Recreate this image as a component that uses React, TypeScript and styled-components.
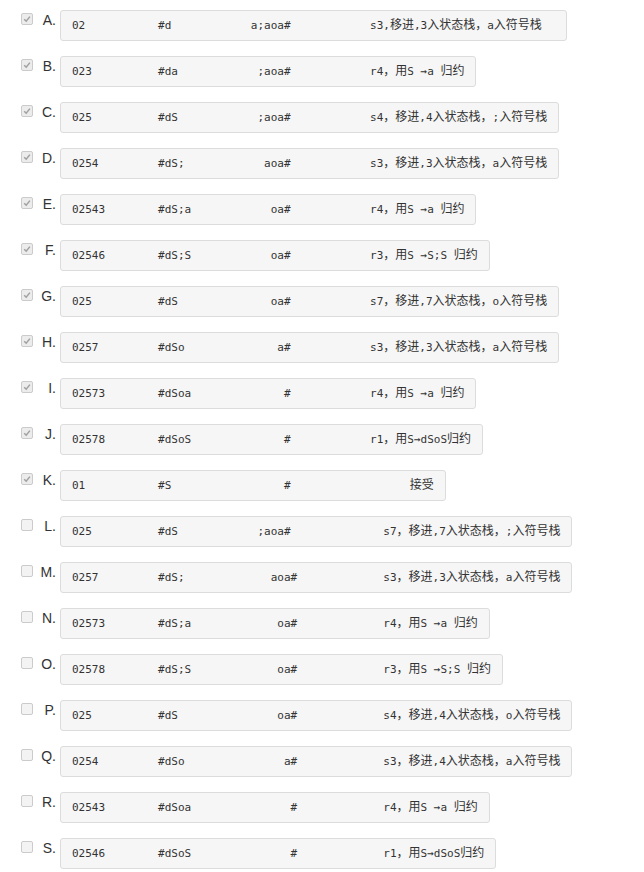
import styled, { createGlobalStyle } from "styled-components";

const GlobalStyle = createGlobalStyle`
  body {
    margin: 0;
    background: #fff;
    font-family: "Liberation Sans", Arial, sans-serif;
  }
`;

interface IRow {
  label: string;
  checked: boolean;
  state: string;
  symbols: string;
  input: string;
  inputAt: number;
  action: string;
  actionAt: number;
  trail?: number;
}

const rows: IRow[] = [
  { label: "A", checked: true, state: "02", symbols: "#d", input: "a;aoa#", inputAt: 27, action: "s3,移进,3入状态栈，a入符号栈", actionAt: 45, trail: 2 },
  { label: "B", checked: true, state: "023", symbols: "#da", input: ";aoa#", inputAt: 28, action: "r4，用S →a 归约", actionAt: 45 },
  { label: "C", checked: true, state: "025", symbols: "#dS", input: ";aoa#", inputAt: 28, action: "s4，移进,4入状态栈，;入符号栈", actionAt: 45 },
  { label: "D", checked: true, state: "0254", symbols: "#dS;", input: "aoa#", inputAt: 29, action: "s3，移进,3入状态栈，a入符号栈", actionAt: 45 },
  { label: "E", checked: true, state: "02543", symbols: "#dS;a", input: "oa#", inputAt: 30, action: "r4，用S →a 归约", actionAt: 45 },
  { label: "F", checked: true, state: "02546", symbols: "#dS;S", input: "oa#", inputAt: 30, action: "r3，用S →S;S 归约", actionAt: 45 },
  { label: "G", checked: true, state: "025", symbols: "#dS", input: "oa#", inputAt: 30, action: "s7，移进,7入状态栈，o入符号栈", actionAt: 45 },
  { label: "H", checked: true, state: "0257", symbols: "#dSo", input: "a#", inputAt: 31, action: "s3，移进,3入状态栈，a入符号栈", actionAt: 45 },
  { label: "I", checked: true, state: "02573", symbols: "#dSoa", input: "#", inputAt: 32, action: "r4，用S →a 归约", actionAt: 45 },
  { label: "J", checked: true, state: "02578", symbols: "#dSoS", input: "#", inputAt: 32, action: "r1，用S→dSoS归约", actionAt: 45 },
  { label: "K", checked: true, state: "01", symbols: "#S", input: "#", inputAt: 32, action: "接受", actionAt: 51 },
  { label: "L", checked: false, state: "025", symbols: "#dS", input: ";aoa#", inputAt: 28, action: "s7，移进,7入状态栈，;入符号栈", actionAt: 47 },
  { label: "M", checked: false, state: "0257", symbols: "#dS;", input: "aoa#", inputAt: 30, action: "s3，移进,3入状态栈，a入符号栈", actionAt: 47 },
  { label: "N", checked: false, state: "02573", symbols: "#dS;a", input: "oa#", inputAt: 31, action: "r4，用S →a 归约", actionAt: 47 },
  { label: "O", checked: false, state: "02578", symbols: "#dS;S", input: "oa#", inputAt: 31, action: "r3，用S →S;S 归约", actionAt: 47 },
  { label: "P", checked: false, state: "025", symbols: "#dS", input: "oa#", inputAt: 31, action: "s4，移进,4入状态栈，o入符号栈", actionAt: 47 },
  { label: "Q", checked: false, state: "0254", symbols: "#dSo", input: "a#", inputAt: 32, action: "s3，移进,4入状态栈，a入符号栈", actionAt: 47 },
  { label: "R", checked: false, state: "02543", symbols: "#dSoa", input: "#", inputAt: 33, action: "r4，用S →a 归约", actionAt: 47 },
  { label: "S", checked: false, state: "02546", symbols: "#dSoS", input: "#", inputAt: 33, action: "r1，用S→dSoS归约", actionAt: 47 },
];

// build the whitespace-aligned line the way the original <pre> had it
const toLine = (r: IRow) =>
  r.state.padEnd(13) +
  r.symbols.padEnd(r.inputAt - 13) +
  r.input.padEnd(r.actionAt - r.inputAt) +
  r.action +
  " ".repeat(r.trail ?? 0);

// CJK runs get their own span so they keep the full 12px width
const renderMixed = (text: string) =>
  text.split(/([\u3000-\u303f\u4e00-\u9fff\uff00-\uffef]+)/).map((part, i) =>
    i % 2 === 1 ? <StyledHan key={i}>{part}</StyledHan> : part
  );

const CheckMark = () => (
  <svg width="8" height="8" viewBox="0 0 8 8">
    <path d="M1.2 4.2 L3.2 6.2 L6.9 1.6" fill="none" stroke="#a0a0a0" strokeWidth="1.5" />
  </svg>
);

const App: React.FC = () => {
  return (
    <>
      <GlobalStyle />
      <StyledList>
        {rows.map((r) => (
          <StyledRow key={r.label}>
            <StyledCheck $checked={r.checked}>{r.checked && <CheckMark />}</StyledCheck>
            <StyledLabel>{r.label}.</StyledLabel>
            <StyledCode>{renderMixed(toLine(r))}</StyledCode>
          </StyledRow>
        ))}
      </StyledList>
    </>
  );
};

export default App;

const StyledList = styled.div`
  display: flex;
  flex-direction: column;
  padding: 10px 0 0 21px;
`;

const StyledRow = styled.div`
  display: flex;
  align-items: flex-start;
  height: 46px;
`;

const StyledCheck = styled.span<{ $checked: boolean }>`
  box-sizing: border-box;
  width: 12px;
  height: 12px;
  margin-top: 3px;
  border: 1px solid #cbcbcb;
  border-radius: 2px;
  background: ${(p) => (p.$checked ? "#ececec" : "#f3f3f3")};
  display: flex;
  align-items: center;
  justify-content: center;
`;

const StyledLabel = styled.span`
  width: 23px;
  margin-right: 4px;
  margin-top: 2px;
  text-align: right;
  font-size: 14px;
  line-height: 16px;
  color: #333;
`;

const StyledCode = styled.div`
  box-sizing: border-box;
  height: 31px;
  padding: 0 11px;
  border: 1px solid #dcdcdc;
  border-radius: 3px;
  background: #f6f6f6;
  font-family: "DejaVu Sans Mono", "Noto Sans CJK SC", monospace;
  font-size: 11px;
  line-height: 29px;
  white-space: pre;
  color: #333;
`;

const StyledHan = styled.span`
  font-family: "Noto Sans CJK SC", sans-serif;
  font-size: 12px;
  line-height: 1;
`;
